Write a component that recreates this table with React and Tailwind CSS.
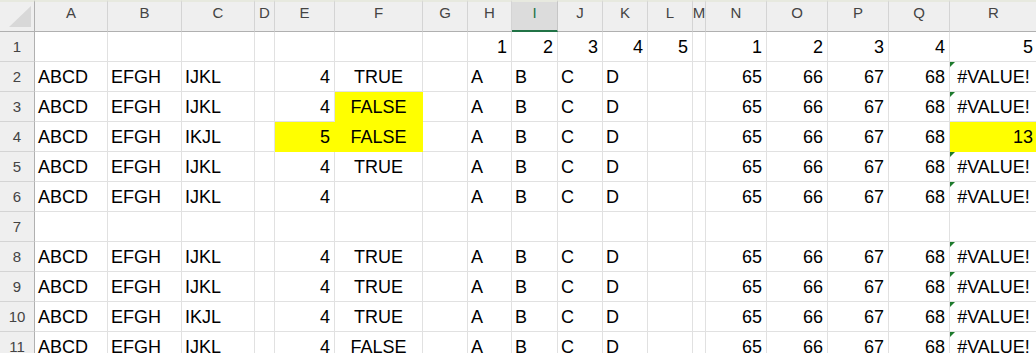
import React from 'react';

const cols = ['A', 'B', 'C', 'D', 'E', 'F', 'G', 'H', 'I', 'J', 'K', 'L', 'M', 'N', 'O', 'P', 'Q', 'R'];

// each row: map of column -> { v, align, fill, err }
const base = (c, e, f, r, opts = {}) => ({
  A: { v: 'ABCD' },
  B: { v: 'EFGH' },
  C: { v: c },
  E: { v: e, align: 'right', fill: opts.eFill },
  F: { v: f, align: 'center', fill: opts.fFill },
  H: { v: 'A' },
  I: { v: 'B' },
  J: { v: 'C' },
  K: { v: 'D' },
  N: { v: '65', align: 'right' },
  O: { v: '66', align: 'right' },
  P: { v: '67', align: 'right' },
  Q: { v: '68', align: 'right' },
  R: r,
});

const errR = { v: '#VALUE!', align: 'center', err: true };

const rows = [
  {
    H: { v: '1', align: 'right' },
    I: { v: '2', align: 'right' },
    J: { v: '3', align: 'right' },
    K: { v: '4', align: 'right' },
    L: { v: '5', align: 'right' },
    N: { v: '1', align: 'right' },
    O: { v: '2', align: 'right' },
    P: { v: '3', align: 'right' },
    Q: { v: '4', align: 'right' },
    R: { v: '5', align: 'right' },
  },
  base('IJKL', '4', 'TRUE', errR),
  base('IJKL', '4', 'FALSE', errR, { fFill: true }),
  base('IKJL', '5', 'FALSE', { v: '13', align: 'right', fill: true }, { eFill: true, fFill: true }),
  base('IJKL', '4', 'TRUE', errR),
  base('IJKL', '4', '', errR),
  {},
  base('IJKL', '4', 'TRUE', errR),
  base('IJKL', '4', 'TRUE', errR),
  base('IKJL', '4', 'TRUE', errR),
  base('IJKL', '4', 'FALSE', errR),
];

function Cell({ cell }) {
  const align =
    cell?.align === 'right' ? 'justify-end pr-[4px]' : cell?.align === 'center' ? 'justify-center' : 'justify-start pl-[3px]';
  const fill = cell?.fill ? 'bg-[#ffff00] border-[#ffff00]' : 'bg-white border-[#e1e1e1]';
  return (
    <div className={`relative flex items-center h-[30px] border-r border-b overflow-visible whitespace-nowrap ${align} ${fill}`}>
      {cell?.err && (
        <div className="absolute left-0 top-0 w-0 h-0 border-t-[5px] border-r-[5px] border-t-[#1d7a2c] border-r-transparent" />
      )}
      <span className="text-[18px] text-black leading-none">{cell?.v}</span>
    </div>
  );
}

export default function App() {
  return (
    <div
      className="w-[1036px] h-[353px] overflow-hidden bg-white"
      style={{ fontFamily: '"Liberation Sans", Arial, sans-serif' }}
    >
      <div className="grid grid-cols-[35px_73px_74px_73px_20px_60px_88px_45px_44px_46px_45px_45px_45px_13px_61px_61px_61px_61px_88px] w-[1040px]">
        {/* corner */}
        <div className="relative h-[32px] bg-[#efefef] border-t-2 border-t-[#e7e9df] border-r border-r-[#b0b0b0] border-b border-b-[#b0b0b0]">
          <div className="absolute left-[9px] top-[4px] w-0 h-0 border-b-[21px] border-l-[22px] border-b-[#d8d8d8] border-l-transparent" />
        </div>
        {cols.map((c) =>
          c === 'I' ? (
            <div
              key={c}
              className="flex justify-center items-start pt-[3px] h-[32px] bg-[#dcdcdc] border-t-2 border-t-[#e7e9df] border-r border-r-[#c6c6c6] border-b-2 border-b-[#217346] text-[15px] leading-none text-[#217346]"
            >
              {c}
            </div>
          ) : (
            <div
              key={c}
              className="flex justify-center items-start pt-[3px] h-[32px] bg-[#efefef] border-t-2 border-t-[#e7e9df] border-r border-r-[#d4d4d4] border-b border-b-[#b0b0b0] text-[15px] leading-none text-[#444444]"
            >
              {c}
            </div>
          )
        )}
        {rows.map((row, i) => (
          <React.Fragment key={i}>
            <div className="flex items-center justify-center h-[30px] bg-[#efefef] border-r border-r-[#b0b0b0] border-b border-b-[#d4d4d4] text-[15px] leading-none text-[#444444]">
              {i + 1}
            </div>
            {cols.map((c) => (
              <Cell key={c} cell={row[c]} />
            ))}
          </React.Fragment>
        ))}
      </div>
    </div>
  );
}
